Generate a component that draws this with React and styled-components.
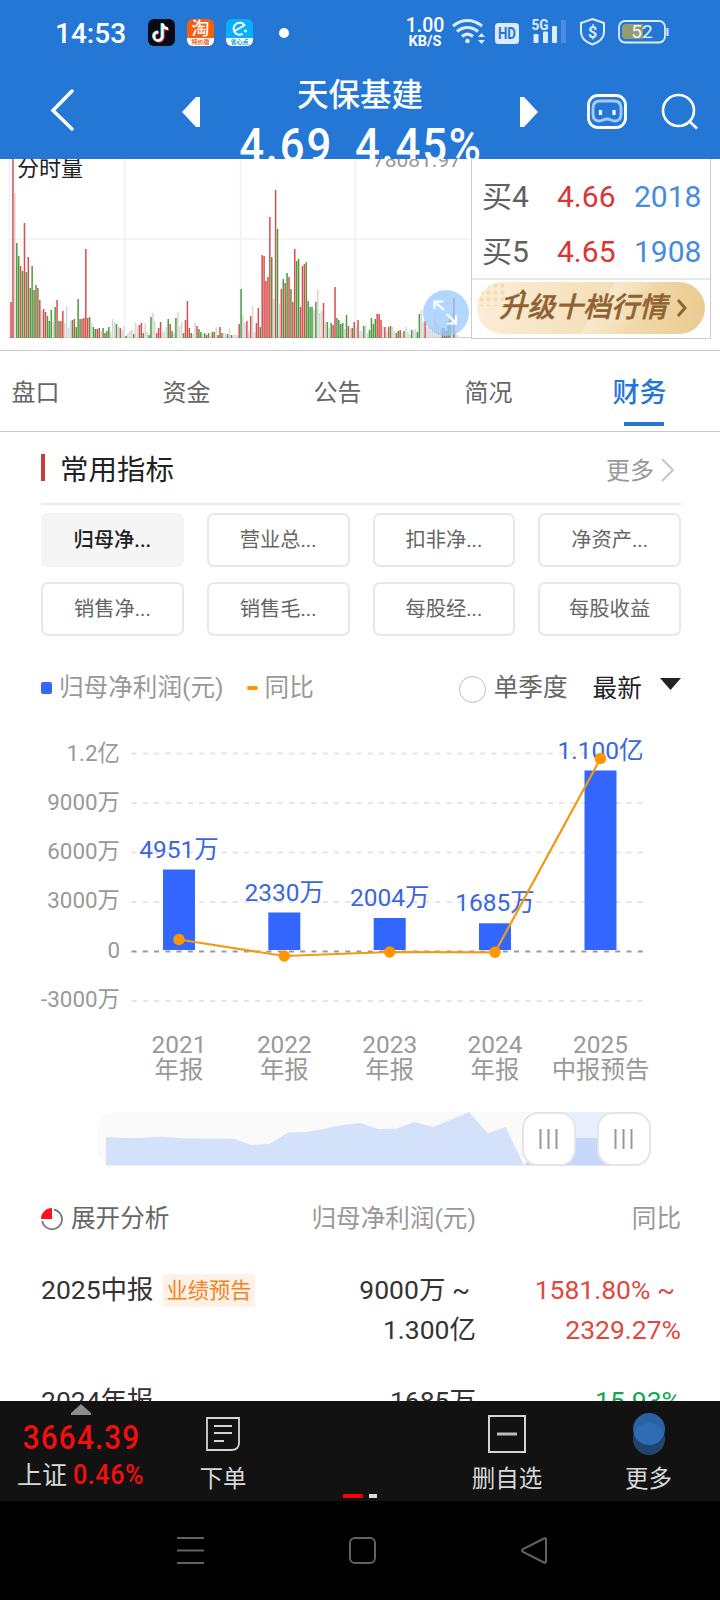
import React from "react";
import styled, { createGlobalStyle } from "styled-components";

const volumes = `r36 r190 n145 g95 g82 r72 g67 r115 g66 r81 g50 g72 g48 r53 g50 r38 n27 r29 r26 g22
g17 g28 n16 g31 r38 g17 r17 r27 n15 n32 n10 n17 g18 r19 g11 g39 g19 r19 r20 r89
r20 g21 n15 g11 g9 r9 r10 n7 g10 r5 g7 g11 n6 n19 n16 g14 n12 r10 n8 n12
g2 n5 n7 n8 g4 n15 n12 r13 r15 g5 n15 n6 g3 g21 n25 n17 r5 r10 r16 n6
n7 n11 g19 r14 g7 n5 g20 n26 n12 n16 g5 r18 r37 r10 g5 n4 n15 r12 g9 g6
n4 g5 r3 g5 n2 r6 g6 n11 r3 r11 g5 n5 n4 g4 n10 g3 n3 n4 n3
r14 g49 n23 n15 r17 n7 r22 n32 n6 r15 r30 g11 r83 r82 r57 r61 r121 g81 n39 r148
g109 n34 r49 g59 r55 g65 r61 g49 r36 r89 g77 g79 r31 r72 r74 g76 g37 g31 g31 n28
g36 n49 n25 n27 r35 n16 g16 n10 g15 r13 r51 g20 g18 g14 g15 n9 g23 r12 n10 g10
r16 n11 r18 n7 n7 g12 n13 n5 g8 g20 g14 g19 r24 r24 r18 n12 r11 n7 r11 g12
n11 n7 r5 g7 r8 n5 g7 n11 n6 n4 g8 n8 n9 g6 g24 n28 n16 r17 n10 n13
n7 n10 n20 n16 n12 n8 r10 g10 r7 g17 g20 n12 r40 n7 n3`
  .split(/\s+/)
  .map((v) => ({ kind: v[0], value: Number(v.slice(1)) }));

const volumeColors = { r: "#d64e4e", g: "#4b9a40", n: "#d6d6d6" };

const bids = [
  { level: "买4", price: "4.66", amount: "2018" },
  { level: "买5", price: "4.65", amount: "1908" },
];

const tabs = ["盘口", "资金", "公告", "简况", "财务"];

const metrics = [
  "归母净...",
  "营业总...",
  "扣非净...",
  "净资产...",
  "销售净...",
  "销售毛...",
  "每股经...",
  "每股收益",
];

const axis = [
  { label: "1.2亿", y: 33.5 },
  { label: "9000万", y: 83 },
  { label: "6000万", y: 132.5 },
  { label: "3000万", y: 182 },
  { label: "0", y: 231.5 },
  { label: "-3000万", y: 281 },
];

const profits = [
  { year: "2021", type: "年报", label: "4951万", x: 179, top: 149.5, rate: 219.5 },
  { year: "2022", type: "年报", label: "2330万", x: 284.3, top: 192.5, rate: 236 },
  { year: "2023", type: "年报", label: "2004万", x: 389.7, top: 198, rate: 232 },
  { year: "2024", type: "年报", label: "1685万", x: 495, top: 203.3, rate: 232.3 },
  { year: "2025", type: "中报预告", label: "1.100亿", x: 600.5, top: 50.5, rate: 38.5 },
];

function StatusBar() {
  return (
    <Status>
      <Time>14:53</Time>
      <AppIcons>
        <svg width="27" height="27" viewBox="0 0 27 27">
          <rect width="27" height="27" rx="6" fill="#090a16" />
          <g fill="none" strokeWidth="2.4">
            <path d="M14.500 4.500v12.800a4.300 4.300 0 1 1-4.300-4.300M14.500 4.500c.5 3.200 2.600 5 5.500 5.200" stroke="#35e5e5" transform="translate(-.8 -.5)" />
            <path d="M14.500 4.500v12.800a4.300 4.300 0 1 1-4.300-4.300M14.500 4.500c.5 3.200 2.600 5 5.500 5.200" stroke="#f2385a" transform="translate(.9 .8)" />
            <path d="M14.500 4.500v12.800a4.300 4.300 0 1 1-4.300-4.300M14.500 4.500c.5 3.200 2.600 5 5.500 5.200" stroke="#fff" />
          </g>
        </svg>
        <AppIcon $bg="#f4600f">
          <b>淘</b>
          <AppStrip $color="#f4600f">特价版</AppStrip>
        </AppIcon>
        <AppIcon $bg="#06b0fb">
          <svg width="27" height="18" viewBox="0 0 27 18" fill="none" stroke="#fff" strokeWidth="2" strokeLinecap="round">
            <path d="M9.500 11l9-5.200A6 6 0 1 0 16 14.700" />
            <circle cx="19.5" cy="11.500" r=".5" />
          </svg>
          <AppStrip $color="#06a0e8">省心点</AppStrip>
        </AppIcon>
      </AppIcons>
      <Dot />
      <Speed>
        <b>1.00</b>
        <span>KB/S</span>
      </Speed>
      <StatusIcons width="220" height="32" viewBox="450 15 220 32" fill="none" stroke="#dcebff">
        <g strokeWidth="3">
          <path d="M453 26c9-7.500 20-7.500 29 0M457 31.500c6.500-5.500 14.500-5.500 21 0M462 36.500c3.500-3 7.500-3 11 0" />
        </g>
        <circle cx="467.500" cy="41" r="2.300" fill="#dcebff" stroke="none" />
        <path d="M478 37l3.500-4 3.500 4zM478 40l3.500 4 3.500-4z" fill="#dcebff" stroke="none" />
        <rect x="495" y="23" width="24" height="21" rx="3.500" fill="#dcebff" stroke="none" />
        <text x="498" y="39" fontSize="16" fontWeight="700" fill="#2577d5" stroke="none" textLength="18" lengthAdjust="spacingAndGlyphs">HD</text>
        <text x="531.500" y="30" fontSize="14.500" fontWeight="700" fill="#dcebff" stroke="none" textLength="17" lengthAdjust="spacingAndGlyphs">5G</text>
        <g fill="#dcebff" stroke="none">
          <rect x="533.500" y="34" width="5" height="9" rx="1" />
          <rect x="543" y="31.500" width="5" height="11.500" rx="1" />
          <rect x="552" y="26" width="5" height="17" rx="1" />
          <rect x="561" y="20" width="5" height="23" rx="1" opacity=".2" />
        </g>
        <path d="M592.500 19l11.500 4v9c0 6-4.500 10-11.500 12.500C585.500 42 581 38 581 32v-9z" strokeWidth="2" />
        <text x="592.500" y="37.500" textAnchor="middle" fontSize="16" fontWeight="700" fill="#dcebff" stroke="none">$</text>
        <rect x="619" y="21" width="46" height="21.500" rx="6" strokeWidth="1.800" />
        <path d="M626 24h17v15h-17a4 4 0 0 1-4-4v-7a4 4 0 0 1 4-4z" fill="#979b71" stroke="none" />
        <path d="M667.500 28v8" strokeWidth="2" />
        <text x="642" y="38" textAnchor="middle" fontSize="19" fill="#eef5ff" stroke="none">52</text>
      </StatusIcons>
    </Status>
  );
}

function Header() {
  return (
    <Top>
      <StatusBar />
      <TitleBar>
        <BackIcon width="26" height="44" viewBox="0 0 26 44">
          <path d="M23 3L4 22.500 23 41" fill="none" stroke="#fff" strokeWidth="3.500" strokeLinecap="round" />
        </BackIcon>
        <Arrow width="18" height="30">
          <path d="M18 0v30h-4L0 15 14 0z" fill="#fff" />
        </Arrow>
        <Stock>
          <StockName>天保基建</StockName>
          <Quote>
            <span>4.69</span>
            <span>4.45%</span>
          </Quote>
        </Stock>
        <Arrow width="18" height="30">
          <path d="M0 0v30h4l14-15L4 0z" fill="#fff" />
        </Arrow>
        <HeadIcons width="114" height="40" viewBox="586 92 114 40" fill="none" stroke="#fff">
          <rect x="588.500" y="95.500" width="37" height="32" rx="9.500" strokeWidth="2.800" />
          <path d="M600 101h14q7 0 7 7v6q0 7-6 7c-4 0-4-2-8-2s-4 2-8 2q-6 0-6-7v-6q0-7 7-7z" strokeWidth="2.800" stroke="#a6cbf7" />
          <path d="M600.500 110v5M614 110v5" strokeWidth="3.200" />
          <circle cx="678.500" cy="110.500" r="15.500" strokeWidth="2.600" />
          <path d="M689 121l8 7.500" strokeWidth="2.600" />
        </HeadIcons>
      </TitleBar>
    </Top>
  );
}

function VolumeChart() {
  return (
    <svg width="471" height="191" viewBox="0 159 471 191">
      <path d="M9.500 159v179M124.500 159v179M240.500 159v179M355.500 159v179M9 239h462" stroke="#f0f0f0" strokeWidth="1.500" />
      <path d="M9 337.500h462" stroke="#ccc" />
      {volumes.map((v, i) => (
        <rect key={i} x={10.3 + i * 1.917} y={338 - v.value} width="1.5" height={v.value} fill={volumeColors[v.kind]} />
      ))}
      <text x="17" y="175.500" fontSize="22" fill="#222">分时量</text>
      <text x="461" y="167" fontSize="21" fill="#999" textAnchor="end">78081.97</text>
      <circle cx="446" cy="313" r="23" fill="#9ac8ff" fillOpacity=".75" />
      <path d="M434.500 309v-7.500h9M435 302l9 8M456 315.500v8h-9M446.500 314l9 8.500" fill="none" stroke="#fff" strokeWidth="2.200" />
    </svg>
  );
}

function ProfitChart() {
  return (
    <ChartSvg width="720" height="380" viewBox="0 0 720 380">
      {axis.map((a, i) => (
        <g key={a.label}>
          <text x="120" y={a.y + 7.2 - i * 0.3} fontSize="22.400" fill="#999" textAnchor="end">{a.label}</text>
          <path d={`M131.500 ${a.y}H643`} stroke={a.label === "0" ? "#999" : "#e5e5e5"} strokeWidth="2" strokeDasharray="5 6.250" />
        </g>
      ))}
      {profits.map((p) => (
        <g key={p.year}>
          <rect x={p.x - 16} y={p.top} width="32" height={230 - p.top} fill="#3366ff" />
          <text x={p.x} y={p.top - 12} fontSize="24.500" fill="#3a67df" textAnchor="middle">{p.label}</text>
          <text x={p.x} y="333" fontSize="24.400" fill="#999" textAnchor="middle">{p.year}</text>
          <text x={p.x} y="358" fontSize="24.400" fill="#999" textAnchor="middle">{p.type}</text>
        </g>
      ))}
      <polyline points={profits.map((p) => `${p.x},${p.rate}`).join(" ")} fill="none" stroke="#f39a15" strokeWidth="2.200" />
      {profits.map((p) => (
        <circle key={p.year} cx={p.x} cy={p.rate} r="5.700" fill="#ff9500" />
      ))}
    </ChartSvg>
  );
}

function RangeSlider() {
  return (
    <ChartSvg width="720" height="58" viewBox="0 1110 720 58">
      <rect x="97" y="1112" width="554" height="54" rx="18" fill="#fafafa" />
      <path d="M549 1112h76v53.500h-76z" fill="#e8effc" />
      <path
        d="M106 1165.500V1137l19 1h15l21-1.500 23 2 50 .2 17 6.300 18.500-1 18.500-11.500 19-.5 17-3 18-4 18.500-2 17.500 6 18-.3 18.500-6.700 18.500 5 18-7.300 18-7.700 18.600 21.300 18-6.300 18.500 38.500z"
        fill="#d4e1fa"
      />
      <path d="M524 1165.500l25-27.500h76v27.500z" fill="#c6d7f9" />
      {[523, 598].map((x) => (
        <g key={x}>
          <rect x={x} y="1113" width="52" height="52" rx="15" fill="#fff" stroke="#e5e5e5" strokeWidth="2" />
          <path d={`M${x + 17.5} 1129v20m8 -20v20m8 -20v20`} stroke="#999" strokeWidth="2" />
        </g>
      ))}
    </ChartSvg>
  );
}

function BottomBar() {
  return (
    <Bottom>
      <IndexBlock>
        <svg width="20" height="11">
          <path d="M10 0l10 9v2H0V9z" fill="#8c8c8c" />
        </svg>
        <IndexValue>3664.39</IndexValue>
        <IndexChange>
          上证<b>0.46%</b>
        </IndexChange>
      </IndexBlock>
      <Action $width="122px">
        <svg width="40" height="42" fill="none" stroke="#d5d5d5" strokeWidth="1.800">
          <path d="M4 5h32v25q0 7-8 7H4zM11 13h18M11 20h18M11 28h10" />
        </svg>
        下单
      </Action>
      <Pager>
        <PageMark $active />
        <PageMark />
      </Pager>
      <Action $width="140px">
        <svg width="40" height="42" fill="none" stroke="#d5d5d5" strokeWidth="2">
          <path d="M2 3h36v36H2z" />
          <path d="M10 21h20" strokeWidth="3" stroke="#bbb" />
        </svg>
        删自选
      </Action>
      <Action $width="143px">
        <svg width="40" height="44">
          <circle cx="20" cy="26" r="16" fill="#22456f" />
          <circle cx="20" cy="16" r="16" fill="#2b62a6" />
          <path d="M7.500 16a16 16 0 0 1 25 0a16 16 0 0 1-25 10a16 16 0 0 1 0-10z" fill="none" />
          <path d="M7.510 21M7.510 16A16 16 0 0 1 32.490 16L35.200 21A16 16 0 0 1 4.800 21z" fill="#2e6cb5" />
        </svg>
        更多
      </Action>
    </Bottom>
  );
}

export default function App() {
  return (
    <Screen>
      <GlobalStyle />
      <Header />
      <Content>
        <Trade>
          <VolumeChart />
          <OrderBook>
            {bids.map((b) => (
              <Bid key={b.level}>
                <Level>{b.level}</Level>
                <Price>{b.price}</Price>
                <Amount>{b.amount}</Amount>
              </Bid>
            ))}
            <PromoBox>
              <Promo>
                升级十档行情
                <svg width="12" height="20" fill="none" stroke="#8f6233" strokeWidth="3">
                  <path d="M2 2l7 8-7 8" />
                </svg>
              </Promo>
            </PromoBox>
          </OrderBook>
        </Trade>

        <Tabs>
          {tabs.map((t) => (
            <Tab key={t} $active={t === "财务"}>
              {t}
            </Tab>
          ))}
        </Tabs>

        <SectionHead>
          <h2>常用指标</h2>
          <More>
            更多
            <svg width="14" height="26" fill="none" stroke="#c8c8c8" strokeWidth="2.200">
              <path d="M1 2l11 11L1 24" />
            </svg>
          </More>
        </SectionHead>
        <Metrics>
          {metrics.map((m, i) => (
            <Metric key={m} $active={i === 0}>
              {m}
            </Metric>
          ))}
        </Metrics>

        <Legend>
          <Swatch $color="#3366ff" $height="12px" />
          <LegendText>归母净利润(元)</LegendText>
          <Swatch $color="#ff9500" $height="4px" />
          <LegendText>同比</LegendText>
          <Radio />
          <LegendText $color="#666">单季度</LegendText>
          <Latest>最新</Latest>
          <svg width="21" height="12">
            <path d="M0 0h21L10.500 12z" fill="#222" />
          </svg>
        </Legend>

        <ProfitChart />
        <RangeSlider />

        <TableHead>
          <Expand>
            <svg width="22" height="24" viewBox="0 0 22 24">
              <path d="M13 2.500A10 10 0 1 1 1.200 14" fill="none" stroke="#777" strokeWidth="1.800" />
              <path d="M11 12H0A11 11 0 0 1 11 1z" fill="#ff0f23" />
            </svg>
            展开分析
          </Expand>
          <Cell>归母净利润(元)</Cell>
          <Cell>同比</Cell>
        </TableHead>
        <Row>
          <Period>
            2025中报<Badge>业绩预告</Badge>
          </Period>
          <Cell>
            <Tilde>9000万 ~</Tilde>
            1.300亿
          </Cell>
          <Cell $color="#e0483e">
            <Tilde>1581.80% ~</Tilde>
            2329.27%
          </Cell>
        </Row>
        <Row>
          <Period>2024年报</Period>
          <Cell>1685万</Cell>
          <Cell $color="#12a650">15.93%</Cell>
        </Row>
      </Content>
      <BottomBar />
      <SystemNav>
        <svg width="720" height="98" fill="none" stroke="#626262" strokeWidth="2">
          <path d="M177 37h27M177 49.500h27M177 62h27" />
          <rect x="350" y="37" width="25" height="25" rx="5" />
          <path d="M544 37.500q2 -1 2 1v22q0 2-2 1l-21-10.500q-2-1.500 0-3z" />
        </svg>
      </SystemNav>
    </Screen>
  );
}

const GlobalStyle = createGlobalStyle`
  * {
    box-sizing: border-box;
  }
  body {
    margin: 0;
    font-family: Roboto, "Noto Sans CJK SC", sans-serif;
  }
  svg {
    display: block;
    flex-shrink: 0;
  }
`;

const Screen = styled.div`
  width: 720px;
  height: 1600px;
  display: flex;
  flex-direction: column;
  background: #fff;
  overflow: hidden;
`;

//Header
const Top = styled.header`
  height: 159px;
  flex-shrink: 0;
  overflow: hidden;
  background: #2577d5;
  color: #fff;
`;
const Status = styled.div`
  display: flex;
  align-items: center;
  height: 66px;
  padding-left: 55px;
`;
const Time = styled.div`
  width: 93px;
  font-size: 28px;
  font-weight: 500;
`;
const AppIcons = styled.div`
  display: flex;
  gap: 12px;
  margin-top: -1px;
`;
const AppIcon = styled.div`
  width: 27px;
  height: 27px;
  border-radius: 6px;
  overflow: hidden;
  text-align: center;
  background: ${(props) => props.$bg};
  b {
    display: block;
    font-size: 18px;
    font-weight: 500;
    line-height: 19px;
    height: 19px;
  }
  svg {
    height: 19px;
  }
`;
const AppStrip = styled.div`
  height: 8px;
  background: #fff;
  color: ${(props) => props.$color};
  font-size: 6px;
  font-weight: 700;
  line-height: 7px;
`;
const Dot = styled.div`
  width: 10px;
  height: 10px;
  margin: -1px 0 0 26px;
  border-radius: 50%;
  background: #fff;
`;
const Speed = styled.div`
  display: flex;
  flex-direction: column;
  align-items: center;
  width: 38px;
  margin: -2px 0 0 117px;
  b {
    font-size: 19.5px;
    font-weight: 500;
    line-height: 18px;
  }
  span {
    font-size: 14.5px;
    font-weight: 700;
    line-height: 13px;
  }
`;
const StatusIcons = styled.svg`
  margin-left: 6px;
  margin-top: -5px;
`;
const TitleBar = styled.div`
  display: flex;
  height: 93px;
`;
const BackIcon = styled.svg`
  margin: 22px 0 0 49px;
`;
const Arrow = styled.svg`
  margin-top: 31px;
  &:nth-of-type(2) {
    margin-left: 107px;
  }
`;
const Stock = styled.div`
  width: 320px;
  padding-top: 10px;
  text-align: center;
`;
const StockName = styled.div`
  font-size: 31.5px;
  font-weight: 500;
  line-height: 40px;
`;
const Quote = styled.div`
  display: flex;
  justify-content: center;
  gap: 24px;
  margin-top: 2px;
  font-size: 48px;
  font-weight: 500;
  line-height: 56px;
  letter-spacing: 2px;
  transform: translateX(1px) scaleX(0.91);
`;
const HeadIcons = styled.svg`
  margin: 26px 0 0 48px;
`;

//Content
const Content = styled.main`
  flex: 1;
  min-height: 0;
  overflow: hidden;
`;
const Trade = styled.section`
  display: flex;
  height: 192px;
  border-bottom: 1px solid #c8c8c8;
`;
const OrderBook = styled.div`
  width: 240px;
  height: 180px;
  padding-top: 10px;
  border: solid #ccc;
  border-width: 0 1px 1px;
`;
const Bid = styled.div`
  display: grid;
  grid-template-columns: 75px 77px 1fr;
  height: 55px;
  padding-left: 10px;
  align-items: center;
  font-size: 30px;
`;
const Level = styled.span`
  padding-bottom: 5px;
  color: #606060;
`;
const Price = styled.span`
  color: #d93636;
`;
const Amount = styled.span`
  color: #468bdc;
`;
const PromoBox = styled.div`
  height: 59px;
  margin-top: -1px;
  padding: 2px 5px;
  border-top: 2px solid #e8e8e8;
`;
const Promo = styled.div`
  position: relative;
  display: flex;
  align-items: center;
  gap: 9px;
  height: 52px;
  padding-left: 22px;
  border-radius: 26px;
  overflow: hidden;
  background: linear-gradient(125deg, transparent 52%, #f8e8cb 53%, #f8e8cb00 70%),
    linear-gradient(100deg, #fbeed8, #f4dfb8 55%, #e9cb8e);
  color: #8f6233;
  font-size: 28px;
  font-weight: 500;
  font-style: italic;
  line-height: 52px;
  white-space: nowrap;
  -webkit-text-stroke: 0.4px #8f6233;
  &::before {
    content: "";
    position: absolute;
    z-index: 0;
    left: 1px;
    top: 0;
    width: 28px;
    height: 24px;
    background: radial-gradient(circle, #f3dcb2 1.8px, transparent 2.4px) 0 0 / 7px 7px;
  }
  &::after {
    content: "";
    position: absolute;
    left: 42px;
    top: 7px;
    border: solid transparent;
    border-width: 0 4px 5px;
    border-bottom-color: #8f6233;
  }
`;

//Tabs
const Tabs = styled.nav`
  display: flex;
  height: 81px;
  padding-right: 4px;
  margin-left: -40px;
  border-bottom: 1px solid #c8c8c8;
`;
const Tab = styled.div`
  width: 151px;
  flex-shrink: 0;
  text-align: center;
  color: ${(props) => (props.$active ? "#2577d5" : "#666")};
  font-size: ${(props) => (props.$active ? "27px" : "24px")};
  font-weight: ${(props) => (props.$active ? 500 : 400)};
  line-height: 84px;
  &::after {
    content: "";
    display: ${(props) => (props.$active ? "block" : "none")};
    width: 40px;
    height: 4px;
    margin: -13px 0 0 60px;
    background: #2577d5;
  }
`;

//Metrics
const SectionHead = styled.div`
  display: flex;
  justify-content: space-between;
  align-items: center;
  height: 73px;
  margin: 0 39px 0 41px;
  border-bottom: 2px solid #ebebeb;
  h2 {
    height: 27px;
    margin: 0;
    padding-left: 15px;
    border-left: 4px solid #c93c3c;
    color: #222;
    font-size: 28.5px;
    font-weight: 400;
    line-height: 33px;
  }
`;
const More = styled.div`
  display: flex;
  align-items: center;
  gap: 7px;
  margin: 1px 6px 0 0;
  color: #999;
  font-size: 24px;
  svg {
    margin-top: 3px;
  }
`;
const Metrics = styled.div`
  display: grid;
  grid-template-columns: repeat(4, 1fr);
  gap: 15px 23px;
  margin: 8px 39px 0 41px;
`;
const Metric = styled.div`
  height: 54px;
  border: 2px solid ${(props) => (props.$active ? "#f5f5f5" : "#e8e8e8")};
  border-radius: 7px;
  background: ${(props) => (props.$active ? "#f5f5f5" : "#fff")};
  color: ${(props) => (props.$active ? "#222" : "#666")};
  font-size: 20.3px;
  font-weight: ${(props) => (props.$active ? 500 : 400)};
  line-height: 51px;
  text-align: center;
`;

//Profit chart
const Legend = styled.div`
  display: flex;
  align-items: center;
  height: 36px;
  margin: 34px 39px 0 41px;
  font-size: 24.6px;
  line-height: 36px;
  svg {
    margin: -8px 0 0 auto;
  }
`;
const LegendText = styled.span`
  padding-bottom: 1px;
  color: ${(props) => props.$color || "#999"};
`;
const Swatch = styled.i`
  width: 11px;
  height: ${(props) => props.$height};
  margin-right: 7px;
  border-radius: 2px;
  background: ${(props) => props.$color};
  span + & {
    margin-left: 23px;
  }
`;
const Radio = styled.i`
  width: 27px;
  height: 27px;
  margin: 2px 8px 0 145px;
  border: 1.5px solid #bbb;
  border-radius: 50%;
`;
const Latest = styled.span`
  margin: 1px 0 0 25px;
  color: #222;
`;
const ChartSvg = styled.svg`
  margin-top: 14px;
  & + & {
    margin-top: 10px;
  }
`;

//Table
const TableHead = styled.div`
  display: grid;
  grid-template-columns: 185px 250px 205px;
  align-items: center;
  height: 40px;
  margin: 28px 39px 0 41px;
  color: #999;
  font-size: 24.6px;
`;
const Expand = styled.div`
  display: flex;
  align-items: center;
  gap: 8px;
  color: #666;
  svg {
    margin-top: 5px;
  }
`;
const Row = styled.div`
  display: grid;
  grid-template-columns: 225px 210px 205px;
  height: 111px;
  margin: 0 39px 0 41px;
  color: #333;
  font-size: 26.5px;
  line-height: 40px;
  ${TableHead} + & {
    margin-top: 34px;
  }
`;
const Period = styled.div`
  display: flex;
  align-items: center;
  height: 40px;
`;
const Badge = styled.span`
  margin-left: 9px;
  padding: 0 4px;
  background: #fff1e6;
  color: #ee8424;
  font-size: 21.2px;
  line-height: 33px;
`;
const Cell = styled.div`
  color: ${(props) => props.$color || "inherit"};
  text-align: right;
`;
const Tilde = styled.div`
  padding-right: 6px;
`;

//Bottom
const Bottom = styled.footer`
  display: flex;
  justify-content: space-between;
  height: 100px;
  flex-shrink: 0;
  background: #121212;
  color: #d8d8d8;
`;
const IndexBlock = styled.div`
  display: flex;
  flex-direction: column;
  align-items: center;
  width: 162px;
  padding-top: 3px;
`;
const IndexValue = styled.div`
  color: #f60d0d;
  font-size: 34px;
  font-weight: 500;
  line-height: 45px;
  letter-spacing: 1.4px;
  transform: translateX(1px) scaleX(0.87);
`;
const IndexChange = styled.div`
  font-size: 25px;
  line-height: 31px;
  b {
    display: inline-block;
    width: 72px;
    margin-left: 6px;
    color: #f60d0d;
    font-size: 27px;
    font-weight: 500;
    letter-spacing: 0.6px;
    transform: scaleX(0.93);
    transform-origin: left;
  }
`;
const Action = styled.div`
  display: flex;
  flex-direction: column;
  align-items: center;
  width: ${(props) => props.$width};
  padding-top: 12px;
  font-size: 23.5px;
  line-height: 48px;
  svg {
    height: 42px;
  }
`;
const Pager = styled.div`
  display: flex;
  align-items: flex-end;
  gap: 6px;
  width: 153px;
  padding: 0 0 3px 59px;
`;
const PageMark = styled.i`
  width: ${(props) => (props.$active ? "20px" : "8px")};
  height: 4px;
  background: ${(props) => (props.$active ? "#f00" : "#ddd")};
`;
const SystemNav = styled.div`
  height: 99px;
  flex-shrink: 0;
  background: #000;
`;
